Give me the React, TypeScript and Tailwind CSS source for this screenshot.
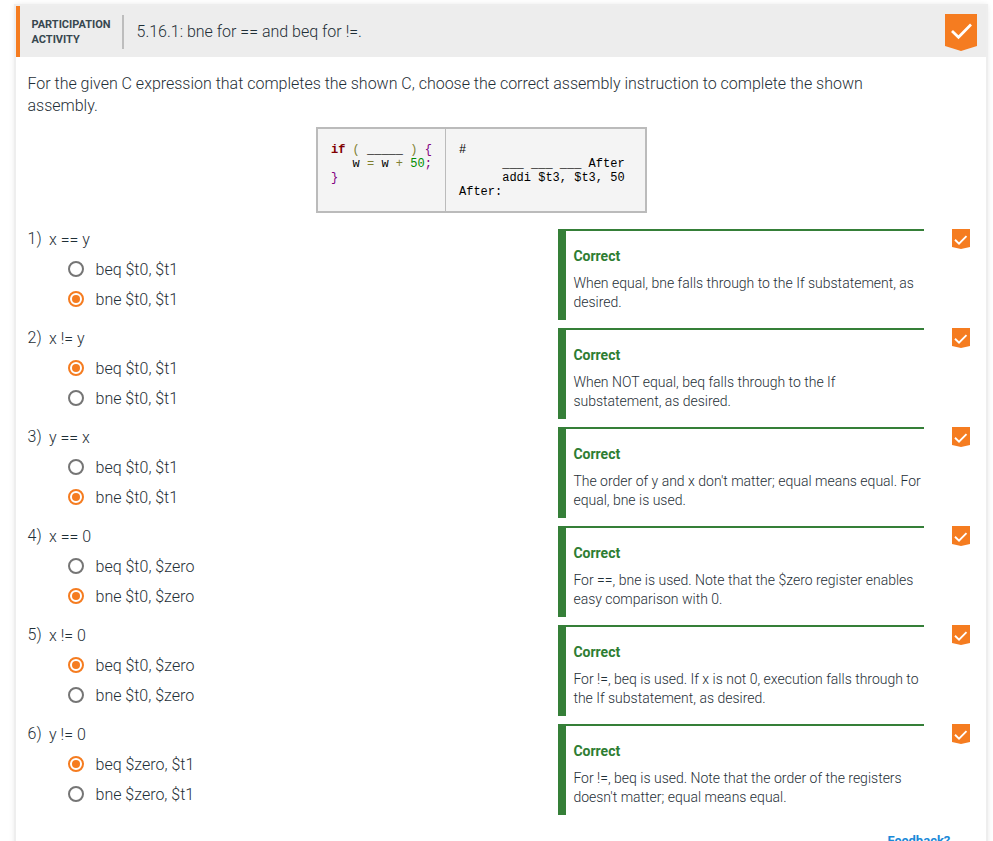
type Question = {
  prompt: string;
  options: [string, string];
  selected: number;
  explanation: [string, string];
};

const questions: Question[] = [
  { prompt: 'x == y', options: ['beq $t0, $t1', 'bne $t0, $t1'], selected: 1, explanation: ['When equal, bne falls through to the If substatement, as', 'desired.'] },
  { prompt: 'x != y', options: ['beq $t0, $t1', 'bne $t0, $t1'], selected: 0, explanation: ['When NOT equal, beq falls through to the If', 'substatement, as desired.'] },
  { prompt: 'y == x', options: ['beq $t0, $t1', 'bne $t0, $t1'], selected: 1, explanation: ["The order of y and x don't matter; equal means equal. For", 'equal, bne is used.'] },
  { prompt: 'x == 0', options: ['beq $t0, $zero', 'bne $t0, $zero'], selected: 1, explanation: ['For ==, bne is used. Note that the $zero register enables', 'easy comparison with 0.'] },
  { prompt: 'x != 0', options: ['beq $t0, $zero', 'bne $t0, $zero'], selected: 0, explanation: ['For !=, beq is used. If x is not 0, execution falls through to', 'the If substatement, as desired.'] },
  { prompt: 'y != 0', options: ['beq $zero, $t1', 'bne $zero, $t1'], selected: 0, explanation: ['For !=, beq is used. Note that the order of the registers', "doesn't matter; equal means equal."] },
];

function Chevron({ small = false }: { small?: boolean }) {
  return small ? (
    <svg width="18" height="20" viewBox="0 0 18 20" className="block shrink-0">
      <path d="M0 0H18V18L9 20L0 18Z" fill="#f57c20" />
      <path d="M3 10.8L7 14.6L14.5 7.1" fill="none" stroke="#fff" strokeWidth="1.9" />
    </svg>
  ) : (
    <svg width="32" height="37" viewBox="0 0 32 37" className="block shrink-0">
      <path d="M0 0H32V32L16 37L0 32Z" fill="#f57c20" />
      <path d="M7 17L13.5 23.3L26 10.5" fill="none" stroke="#fff" strokeWidth="2.7" />
    </svg>
  );
}

function Radio({ label, checked }: { label: string; checked: boolean }) {
  return (
    <label className="flex h-[30px] items-center">
      <span className={checked ? 'flex size-4 items-center justify-center rounded-full border-2 border-[#f57c20]' : 'size-4 rounded-full border-2 border-[#757575]'}>
        {checked && <span className="size-2 rounded-full bg-[#f57c20]" />}
      </span>
      <span className="ml-[11.5px] pt-0.5 whitespace-nowrap">{label}</span>
    </label>
  );
}

function QuestionRow({ question, number }: { question: Question; number: number }) {
  return (
    <section className="flex h-[99px] items-start">
      <div className="w-[530.5px]">
        <div className="flex h-[25px] items-start leading-5">
          <span className="w-[21.5px] shrink-0">{number})</span>
          <span className="pt-px">{question.prompt}</span>
        </div>
        <div className="pl-[40.5px]">
          {question.options.map((label, i) => (
            <Radio key={label} label={label} checked={question.selected === i} />
          ))}
        </div>
      </div>
      <div className="flex h-[91px] w-[366px]">
        <div className="w-2 shrink-0 bg-[#357f38]" />
        <div className="flex-1 border-t-2 border-[#357f38] pt-4 pl-[7.4px] text-sm leading-[19px]">
          <div className="font-bold text-[#2e7d32]">Correct</div>
          <div className="mt-2 whitespace-nowrap">
            {question.explanation[0]}
            <br />
            {question.explanation[1]}
          </div>
        </div>
      </div>
      <div className="ml-7">
        <Chevron small />
      </div>
    </section>
  );
}

export default function App() {
  return (
    <div className="h-[841px] overflow-hidden bg-white pt-1.5 pl-4 font-['Roboto',sans-serif] text-base font-light text-[#1f2f37]">
      <main className="h-[900px] w-[970px] shadow-[0_0_0_2px_#eeeeee,0_0_6px_1px_#e4e4e4]">
        <header className="flex h-[51px] border-l-4 border-[#f57c20] bg-[#ededed]">
          <div className="mt-[9px] ml-[11.5px] h-[34px] w-[92.5px] shrink-0 border-r-2 border-[#bdbdbd] pt-0.5 text-[11px] leading-[15px] font-bold text-[#37474f]">
            PARTICIPATION
            <br />
            ACTIVITY
          </div>
          <h1 className="mt-[14px] ml-[12.5px] leading-6 whitespace-nowrap">5.16.1: bne for == and beq for !=.</h1>
          <div className="mt-2 mr-[9px] ml-auto">
            <Chevron />
          </div>
        </header>
        <div className="bg-white pl-[11.5px]">
          <p className="pt-4 leading-[22px] tracking-[-0.01px] whitespace-nowrap">
            For the given C expression that completes the shown C, choose the correct assembly instruction to complete the shown
            <br />
            assembly.
          </p>
          <div className="mt-[10px] ml-[288.5px] flex h-[86px] w-[331px] border-2 border-[#bbbbbb] bg-[#f4f4f4] font-['Liberation_Mono',monospace] text-xs leading-[14px] font-normal text-black">
            <pre className="w-[128px] border-r border-[#bbbbbb] pt-[14px] pl-[13px] font-[inherit]">
              <b className="text-[#800000]">if</b> <span className="text-[#808030]">(</span> _____ <span className="text-[#808030]">)</span> <span className="text-[#800080]">{'{'}</span>
              {'\n   w '}<span className="text-[#808030]">=</span> w <span className="text-[#808030]">+</span> <span className="text-[#008c00]">50</span><span className="text-[#800080]">;</span>
              {'\n'}<span className="text-[#800080]">{'}'}</span>
            </pre>
            <pre className="pt-[14px] pl-[13px] font-[inherit]">{'#\n      ___ ___ ___ After\n      addi $t3, $t3, 50\nAfter:'}</pre>
          </div>
          <div className="mt-4">
            {questions.map((question, i) => (
              <QuestionRow key={i} question={question} number={i + 1} />
            ))}
          </div>
          <div className="mt-2 ml-[860px] text-[13px] leading-5 font-bold text-[#1989d8]">Feedback?</div>
        </div>
      </main>
    </div>
  );
}
